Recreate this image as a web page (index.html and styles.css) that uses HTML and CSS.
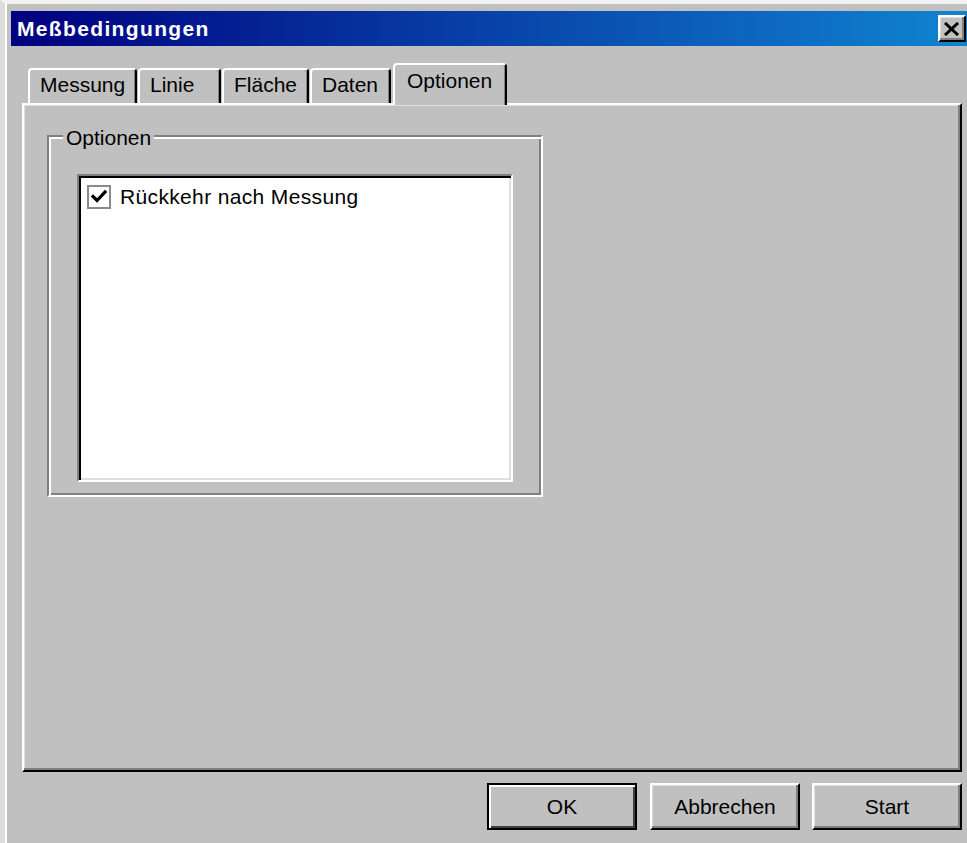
FILE: index.html
```html
<!DOCTYPE html>
<html lang="de">
<head>
<meta charset="utf-8">
<title>Meßbedingungen</title>
<link rel="stylesheet" href="styles.css">
</head>
<body>
<div class="window">
  <div class="titlebar">
    <span class="title">Meßbedingungen</span>
    <button class="close" type="button" aria-label="Schließen">
      <svg width="18" height="14" viewBox="0 0 18 14">
        <path d="M2 1 L15 13 M15 1 L2 13" stroke="#000" stroke-width="3" fill="none"/>
      </svg>
    </button>
  </div>

  <div class="client">
    <div class="tabs">
      <div class="tab tab--messung">Messung</div>
      <div class="tab tab--linie">Linie</div>
      <div class="tab tab--flaeche">Fläche</div>
      <div class="tab tab--daten">Daten</div>
      <div class="tab tab--optionen tab--active">Optionen</div>
    </div>

    <div class="panel">
      <fieldset class="group">
        <legend class="group__label">Optionen</legend>
        <div class="listbox">
          <label class="item">
            <span class="check">
              <svg width="20" height="20" viewBox="0 0 20 20">
                <path d="M4 9.5 L8 13.5 L16 5" stroke="#000" stroke-width="3.2" fill="none" stroke-linecap="square"/>
              </svg>
            </span>
            <span class="item__text">Rückkehr nach Messung</span>
          </label>
        </div>
      </fieldset>
    </div>

    <div class="buttons">
      <button class="btn btn--default" type="button">OK</button>
      <button class="btn" type="button">Abbrechen</button>
      <button class="btn" type="button">Start</button>
    </div>
  </div>
</div>
</body>
</html>
```

FILE: styles.css
```css
body {
  margin: 0;
  background: #c0c0c0;
  font-family: "Liberation Sans", Arial, sans-serif;
  font-size: 21px;
  color: #000;
  overflow: hidden;
}

/* dialog frame */
.window {
  height: 843px;
  box-sizing: border-box;
  border-top: 4px solid #f2f2f2;
  border-left: 5px solid #dcdcdc;
  box-shadow: inset 2px 0 #fff;
  padding: 7px 0 0 6px;
}

.titlebar {
  height: 35px;
  display: flex;
  align-items: center;
  justify-content: space-between;
  padding: 0 1px 0 6px;
  background: linear-gradient(90deg, #000080, #1084d0);
}

.title {
  color: #fff;
  font-weight: bold;
  font-size: 21px;
  letter-spacing: 1.35px;
}

.close {
  width: 28px;
  height: 27px;
  box-sizing: border-box;
  padding: 0;
  background: #c0c0c0;
  border: 2px solid;
  border-color: #fff #000 #000 #fff;
  box-shadow: inset -2px -2px #808080, inset 1px 1px #dfdfdf;
  display: flex;
  align-items: center;
  justify-content: center;
}

.client {
  padding: 17px 5px 0 11px;
}

/* tab strip */
.tabs {
  display: flex;
  align-items: flex-end;
  gap: 1px;
  height: 40px;
  padding-left: 6px;
}

.tab {
  height: 35px;
  box-sizing: border-box;
  border: 2px solid;
  border-bottom: 0;
  border-color: #fff #000 transparent #fff;
  border-radius: 4px 4px 0 0;
  box-shadow: inset -1px 0 #808080;
  padding: 3px 0 0 10px;
  line-height: 24px;
  white-space: nowrap;
  background: #c0c0c0;
}

.tab--messung { width: 109px; }
.tab--linie { width: 83px; }
.tab--flaeche { width: 87px; }
.tab--daten { width: 81px; }
.tab--optionen { width: 114px; }

.tab--active {
  height: 42px;
  margin-bottom: -2px;
  margin-left: 1px;
  position: relative;
  z-index: 1;
  padding: 4px 0 0 12px;
}

.panel {
  height: 669px;
  box-sizing: border-box;
  border: 2px solid;
  border-color: #fff #000 #000 #fff;
  box-shadow: inset -2px -2px #808080, inset 1px 1px #dfdfdf;
  padding: 18px 0 0 23px;
}

/* etched group box */
.group {
  margin: 0;
  width: 496px;
  min-width: 0;
  box-sizing: border-box;
  padding: 25px 28px 13px 28px;
  border: 2px solid;
  border-color: #808080 #fff #fff #808080;
  box-shadow: inset 2px 2px #fff, inset -2px -2px #808080;
}

.group__label {
  margin-left: -14px;
  padding: 4px 3px 0 3px;
  line-height: 22px;
  background: #c0c0c0;
}

.listbox {
  width: 436px;
  height: 308px;
  box-sizing: border-box;
  background: #fff;
  border: 2px solid;
  border-color: #808080 #fff #fff #808080;
  box-shadow: inset 2px 2px #000, inset -2px -2px #dfdfdf;
  padding: 9px 0 0 8px;
}

.item {
  display: flex;
  align-items: center;
  gap: 9px;
}

.check {
  width: 24px;
  height: 24px;
  box-sizing: border-box;
  border: 2px solid #8a8a8a;
  background: #fff;
  display: flex;
  align-items: center;
  justify-content: center;
}

.item__text {
  letter-spacing: 0.35px;
  line-height: 24px;
}

/* command buttons */
.buttons {
  display: flex;
  justify-content: flex-end;
  gap: 12px;
  margin-top: 11px;
}

.btn {
  width: 150px;
  height: 47px;
  box-sizing: border-box;
  padding: 0;
  font: inherit;
  color: #000;
  background: #c0c0c0;
  border: 2px solid;
  border-color: #fff #000 #000 #fff;
  box-shadow: inset -2px -2px #808080, inset 1px 1px #dfdfdf;
}

.btn--default {
  margin-right: 1px;
  border-color: #000;
  box-shadow: inset 2px 2px #fff, inset -2px -2px #404040;
}
```
